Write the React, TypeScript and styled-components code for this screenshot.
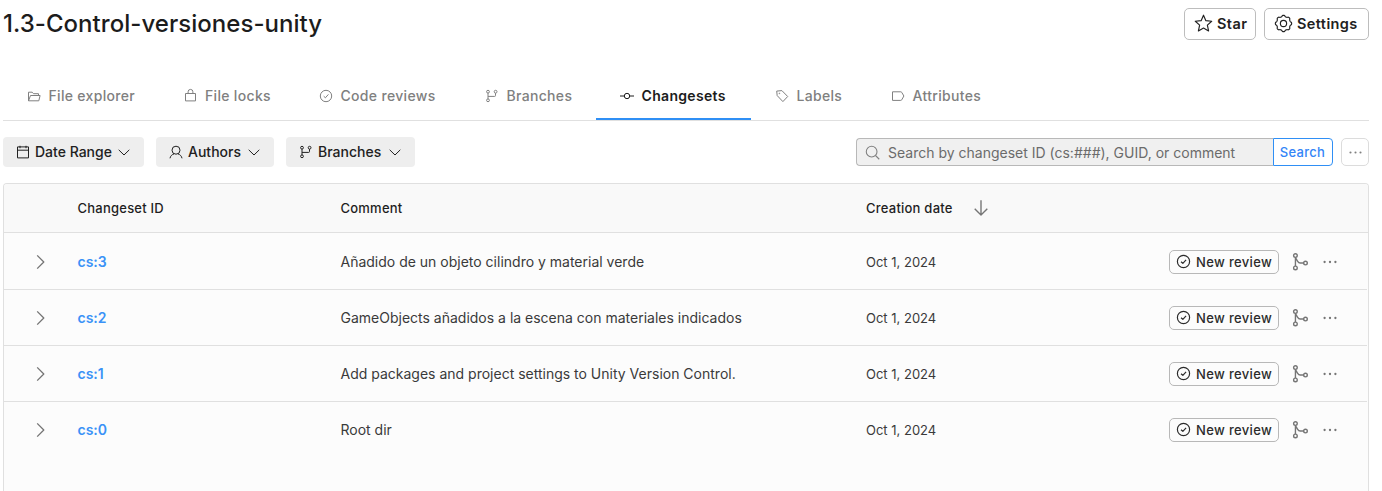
import React from "react";
import styled, { createGlobalStyle } from "styled-components";

const GlobalStyle = createGlobalStyle`
  * { box-sizing: border-box; }
  html, body { margin: 0; height: 100%; background: #fff; overflow: hidden; }
  body { font-family: Inter, "Liberation Sans", sans-serif; color: #1f1f1f; }
  #root { height: 100%; }
  button, input { font-family: inherit; margin: 0; }
`;

const Page = styled.main`
  display: flex;
  flex-direction: column;
  height: 491px;
  padding: 8px 13px 0 3px;
  overflow: hidden;
`;
const Header = styled.header`
  display: flex;
  justify-content: space-between;
  height: 32px;
  flex: none;
`;
const Title = styled.h1`
  margin: 0;
  font-size: 24px;
  line-height: 32px;
  font-weight: 500;
  letter-spacing: 0.04px;
  color: #1c1c1c;
`;
const HeaderActions = styled.div`
  display: flex;
  gap: 8px;
`;
const HeaderButton = styled.button<{ $width: number }>`
  display: flex;
  align-items: center;
  gap: 4px;
  width: ${(p) => p.$width}px;
  height: 32px;
  padding: 0 0 1px 9px;
  border: 1px solid #bdbdbd;
  border-radius: 5px;
  background: #fff;
  color: #212121;
  font-size: 14.5px;
  font-weight: 600;
  letter-spacing: 0.4px;
  white-space: nowrap;
`;
const Tabs = styled.nav`
  display: flex;
  flex: none;
  height: 49px;
  margin-top: 32px;
  border-bottom: 1px solid #e0e0e0;
`;
const Tab = styled.a<{ $width: number; $active?: boolean }>`
  display: flex;
  align-items: center;
  gap: 7.5px;
  width: ${(p) => p.$width}px;
  height: 48px;
  padding-left: 24px;
  padding-bottom: 1px;
  font-size: 14px;
  font-weight: ${(p) => (p.$active ? 600 : 500)};
  letter-spacing: 0.32px;
  color: ${(p) => (p.$active ? "#1c1c1c" : "#808080")};
  box-shadow: ${(p) => (p.$active ? "inset 0 -2px 0 #2f8ff5" : "none")};
  white-space: nowrap;
`;
const Toolbar = styled.div`
  display: flex;
  align-items: center;
  justify-content: space-between;
  flex: none;
  height: 30px;
  margin-top: 16px;
`;
const Filters = styled.div`
  display: flex;
  gap: 12px;
`;
const Filter = styled.button<{ $width: number }>`
  display: flex;
  align-items: center;
  width: ${(p) => p.$width}px;
  height: 30px;
  padding: 0 13px 1px;
  gap: 5px;
  border: 0;
  border-radius: 4px;
  background: #eee;
  color: #212121;
  font-size: 14px;
  font-weight: 500;
  white-space: nowrap;
  svg:last-child { margin-left: auto; }
`;
const SearchArea = styled.div`
  display: flex;
  height: 28px;
`;
const SearchBox = styled.label`
  display: flex;
  align-items: center;
  width: 417px;
  padding-left: 8px;
  gap: 8px;
  border: 1px solid #b8b8b8;
  border-right: 0;
  border-radius: 4px 0 0 4px;
  background: #f0f0f0;
  color: #808080;
`;
const SearchInput = styled.input`
  flex: 1;
  height: 24px;
  padding: 0;
  border: 0;
  outline: 0;
  background: transparent;
  font-size: 14px;
  &::placeholder { color: #6b6b6b; opacity: 1; }
`;
const SearchButton = styled.button`
  width: 60px;
  padding: 0 1px 0 0;
  border: 1px solid #2f8ff5;
  border-radius: 0 4px 4px 0;
  background: #fff;
  color: #3385f7;
  font-size: 13px;
  font-weight: 500;
  letter-spacing: 0.3px;
`;
const MoreButton = styled.button`
  display: flex;
  align-items: center;
  justify-content: center;
  width: 28px;
  margin-left: 8px;
  padding: 0;
  border: 1px solid #dcdcdc;
  border-radius: 5px;
  background: #fff;
  color: #808080;
`;
const Table = styled.section`
  flex: 1;
  margin-top: 16px;
  border: 1px solid #e0e0e0;
  border-bottom: 0;
  border-radius: 4px 4px 0 0;
  background: #fcfcfc;
`;
const Row = styled.div`
  display: grid;
  grid-template-columns: 73.5px 263px 525.5px 303px 1fr;
  align-items: center;
  height: 56px;
  margin-right: 1px;
  border-bottom: 1px solid #e0e0e0;
  &:nth-child(2) { height: 57px; padding-top: 1px; }
  &:last-child { border-bottom-color: transparent; }
`;
const HeadRow = styled(Row)`
  height: 49px;
  margin-right: 0;
  background: #f9f9f9;
  border-radius: 3px 3px 0 0;
  font-size: 13px;
  font-weight: 500;
  letter-spacing: 0.23px;
`;
const SortCell = styled.div`
  display: flex;
  align-items: center;
  gap: 20px;
  svg { color: #757575; }
`;
const ExpandCell = styled.div`
  display: flex;
  padding-left: 29px;
  color: #757575;
`;
const Id = styled.a`
  font-size: 14px;
  font-weight: 600;
  color: #3a92f7;
`;
const Comment = styled.div`
  font-size: 14px;
  color: #3a3a3a;
`;
const DateText = styled.div`
  font-size: 13px;
  color: #3a3a3a;
`;
const Actions = styled.div`
  display: flex;
  align-items: center;
  color: #757575;
`;
const ReviewButton = styled.button`
  display: flex;
  align-items: center;
  gap: 5px;
  width: 110px;
  height: 24px;
  padding: 0 0 0 6px;
  border: 1px solid #b8b8b8;
  border-radius: 5px;
  background: #fcfcfc;
  color: #2b2b2b;
  font-size: 13px;
  font-weight: 500;
  letter-spacing: 0.35px;
  white-space: nowrap;
`;
const RowIcon = styled.span<{ $left: number }>`
  display: flex;
  margin-left: ${(p) => p.$left}px;
`;

type IconProps = { name: string; size?: number; stroke?: number };

const gearOutline =
  Array.from({ length: 96 }, (_, i) => {
    const a = (i / 96) * Math.PI * 2;
    const wave = Math.cos(8 * a);
    const r = 5.55 + 0.45 * Math.sign(wave) * Math.sqrt(Math.abs(wave));
    return `${i ? "L" : "M"}${(7 + r * Math.cos(a)).toFixed(2)} ${(7 + r * Math.sin(a)).toFixed(2)}`;
  }).join("") + "z";

const shapes: Record<string, React.ReactNode> = {
  folder: <path d="M1.5 11.8V3.2h3.7l1.3 1.5h5v1.8M1.5 11.8l2-5.3h9.6l-1.3 5.3z" />,
  lock: <path d="M1.5 4.5h10v7.4h-10zM4.1 4.5V2.8a2.4 2.4 0 0 1 4.8 0v1.7" />,
  check: (
    <>
      <circle cx="7" cy="7" r="5.7" />
      <path d="M4.7 7.2l1.7 1.6 3-3.4" />
    </>
  ),
  branch: (
    <>
      <circle cx="3" cy="2.7" r="1.4" />
      <circle cx="3" cy="11.3" r="1.4" />
      <circle cx="10.6" cy="2.7" r="1.4" />
      <path d="M3 4.1v5.8M3 7.4h6.7a.8.8 0 0 0 .8-.8V4.1" />
    </>
  ),
  commit: (
    <>
      <circle cx="7" cy="7" r="2.7" />
      <path d="M0 7h4.3M9.7 7H14" />
    </>
  ),
  tag: (
    <>
      <path d="M1.7 2.1l5.2-.5 5.8 5.9-4.8 5.1-5.7-6z" />
      <circle cx="4.4" cy="4.4" r=".35" />
    </>
  ),
  attribute: <path d="M1.5 2.8h8.3c.4 0 .7.2.9.5L12.9 7l-2.2 3.9c-.2.3-.5.5-.9.5H1.5z" />,
  calendar: <path d="M1.5 1.9h11v11h-11zM1.5 5.2h11M4 .8v2.4M10 .8v2.4" />,
  user: (
    <>
      <circle cx="7" cy="5.2" r="4" />
      <path d="M1 13.3c.4-2.3 1.9-3.7 4-4.4M13 13.3c-.4-2.3-1.9-3.7-4-4.4" />
    </>
  ),
  down: <path d="M1.7 4.8L7 10l5.3-5.2" />,
  right: <path d="M4.2.4L10.8 7l-6.6 6.6" />,
  search: (
    <>
      <circle cx="6.2" cy="6.2" r="5" />
      <path d="M9.8 9.8l3.5 3.5" />
    </>
  ),
  arrow: <path d="M7 .2v13M1.5 7.7L7 13.2l5.5-5.5" />,
  star: <path d="M7 .9l1.75 4 4.3.45-3.2 2.9.9 4.25L7 10.3l-3.75 2.2.9-4.25-3.2-2.9 4.3-.45z" />,
  gear: (
    <>
      <circle cx="7" cy="7" r="2.3" />
      <path d={gearOutline} />
    </>
  ),
  merge: (
    <>
      <circle cx="3" cy="1.4" r="1.6" />
      <circle cx="3" cy="12.2" r="1.6" />
      <circle cx="11.8" cy="7.9" r="1.6" />
      <path d="M3 3v7.6M3 3.2l1.8 3c.5.8 1.2 1.7 2.4 1.7h3" />
    </>
  ),
  dots: (
    <g fill="currentColor" stroke="none">
      <circle cx="1.6" cy="7" r="1.15" />
      <circle cx="7" cy="7" r="1.15" />
      <circle cx="12.4" cy="7" r="1.15" />
    </g>
  ),
};

const Glyph = styled.svg`
  display: block;
  flex: none;
  overflow: visible;
`;

function Icon({ name, size = 14, stroke = 1 }: IconProps) {
  return (
    <Glyph width={size} height={size} viewBox="0 0 14 14" fill="none" stroke="currentColor" strokeWidth={stroke} strokeLinejoin="round">
      {shapes[name]}
    </Glyph>
  );
}

const tabs = [
  { label: "File explorer", icon: "folder", width: 156.5 },
  { label: "File locks", icon: "lock", width: 135.5 },
  { label: "Code reviews", icon: "check", width: 166 },
  { label: "Branches", icon: "branch", width: 135 },
  { label: "Changesets", icon: "commit", width: 155, active: true },
  { label: "Labels", icon: "tag", width: 116 },
  { label: "Attributes", icon: "attribute", width: 138 },
];

const filters = [
  { label: "Date Range", icon: "calendar", width: 141 },
  { label: "Authors", icon: "user", width: 118 },
  { label: "Branches", icon: "branch", width: 129 },
];

const changesets = [
  { id: "cs:3", comment: "Añadido de un objeto cilindro y material verde" },
  { id: "cs:2", comment: "GameObjects añadidos a la escena con materiales indicados" },
  { id: "cs:1", comment: "Add packages and project settings to Unity Version Control." },
  { id: "cs:0", comment: "Root dir" },
];

export default function App() {
  return (
    <Page>
      <GlobalStyle />
      <Header>
        <Title>1.3-Control-versiones-unity</Title>
        <HeaderActions>
          <HeaderButton $width={72}>
            <Icon name="star" size={19} stroke={0.85} />
            Star
          </HeaderButton>
          <HeaderButton $width={105}>
            <Icon name="gear" size={19} stroke={0.85} />
            Settings
          </HeaderButton>
        </HeaderActions>
      </Header>
      <Tabs>
        {tabs.map((t) => (
          <Tab key={t.label} $width={t.width} $active={t.active}>
            <Icon name={t.icon} />
            {t.label}
          </Tab>
        ))}
      </Tabs>
      <Toolbar>
        <Filters>
          {filters.map((f) => (
            <Filter key={f.label} $width={f.width}>
              <Icon name={f.icon} />
              {f.label}
              <Icon name="down" />
            </Filter>
          ))}
        </Filters>
        <SearchArea>
          <SearchBox>
            <Icon name="search" size={15} />
            <SearchInput placeholder="Search by changeset ID (cs:###), GUID, or comment" />
          </SearchBox>
          <SearchButton>Search</SearchButton>
          <MoreButton>
            <Icon name="dots" size={13} />
          </MoreButton>
        </SearchArea>
      </Toolbar>
      <Table>
        <HeadRow>
          <span />
          <span>Changeset ID</span>
          <span>Comment</span>
          <SortCell>
            Creation date
            <Icon name="arrow" size={16} stroke={1.2} />
          </SortCell>
          <span />
        </HeadRow>
        {changesets.map((c) => (
          <Row key={c.id}>
            <ExpandCell>
              <Icon name="right" stroke={1.3} />
            </ExpandCell>
            <Id>{c.id}</Id>
            <Comment>{c.comment}</Comment>
            <DateText>Oct 1, 2024</DateText>
            <Actions>
              <ReviewButton>
                <Icon name="check" size={15} stroke={1.1} />
                New review
              </ReviewButton>
              <RowIcon $left={13}>
                <Icon name="merge" size={16} stroke={1.2} />
              </RowIcon>
              <RowIcon $left={15}>
                <Icon name="dots" />
              </RowIcon>
            </Actions>
          </Row>
        ))}
      </Table>
    </Page>
  );
}
